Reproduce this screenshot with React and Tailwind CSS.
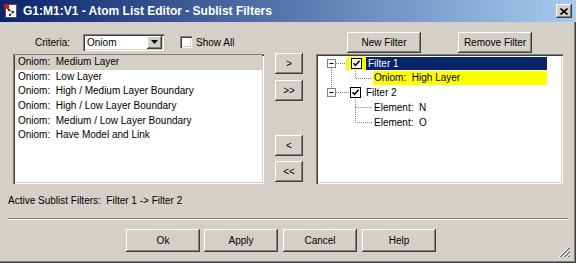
import React from "react";

const raised =
  "bg-[#d4d0c8] shadow-[inset_-1px_-1px_0_#404040,inset_1px_1px_0_#ffffff,inset_-2px_-2px_0_#808080]";
const sunken =
  "bg-white shadow-[inset_1px_1px_0_#808080,inset_2px_2px_0_#404040,inset_-1px_-1px_0_#ffffff,inset_-2px_-2px_0_#d4d0c8]";

function Btn({ children, className }) {
  return (
    <div className={`${raised} flex items-center justify-center ${className}`}>
      {children}
    </div>
  );
}

function Check({ className }) {
  return (
    <div className={`w-[11px] h-[11px] bg-white border border-black flex items-center justify-center ${className}`}>
      <svg width="9" height="9" viewBox="0 0 9 9">
        <path d="M1.5 4.2 L3.5 6.3 L7.6 1.8" fill="none" stroke="#000" strokeWidth="1.6" />
      </svg>
    </div>
  );
}

export default function App() {
  const items = [
    "Oniom:  Medium Layer",
    "Oniom:  Low Layer",
    "Oniom:  High / Medium Layer Boundary",
    "Oniom:  High / Low Layer Boundary",
    "Oniom:  Medium / Low Layer Boundary",
    "Oniom:  Have Model and Link",
  ];
  return (
    <div className="w-[576px] h-[263px] bg-[#d4d0c8] flex flex-col font-['Liberation_Sans',Arial,sans-serif] text-[10px] text-black relative overflow-hidden shadow-[inset_-1px_-1px_0_#404040,inset_-2px_-2px_0_#808080]">
      {/* Title bar */}
      <div className="h-[22px] flex items-center bg-[linear-gradient(to_right,#0a246a,#a6caf0)] pl-[4px] pr-[4px] shrink-0">
        <svg width="14" height="14" viewBox="0 0 14 14" className="shrink-0">
          <rect x="1.5" y="0.5" width="11" height="13" fill="#fff" stroke="#555" />
          <circle cx="5" cy="6" r="1.2" fill="#333" />
          <circle cx="9" cy="8" r="1.2" fill="#333" />
          <circle cx="6" cy="11" r="1.2" fill="#333" />
          <path d="M5 6 L9 8 L6 11" stroke="#333" strokeWidth="0.8" fill="none" />
          <rect x="0" y="0" width="5" height="5" fill="#e01010" />
        </svg>
        <div className="ml-[5px] text-white font-bold text-[12px] leading-none">
          G1:M1:V1 - Atom List Editor - Sublist Filters
        </div>
        <div className="flex-1" />
        <Btn className="w-[16px] h-[14px]">
          <svg width="8" height="7" viewBox="0 0 8 7">
            <path d="M0.5 0.5 L7.5 6.5 M7.5 0.5 L0.5 6.5" stroke="#000" strokeWidth="1.6" />
          </svg>
        </Btn>
      </div>

      {/* Body */}
      <div className="flex-1 flex flex-col px-[8px] pt-[9px]">
        <div className="flex">
          {/* Left column */}
          <div className="ml-[5px] w-[251px] flex flex-col">
            <div className="h-[22px] flex items-center">
              <span className="ml-[22px]">Criteria:</span>
              <div className={`${sunken} ml-[13px] w-[81px] h-[17px] flex items-center pl-[4px] pr-[2px]`}>
                <span className="flex-1">Oniom</span>
                <Btn className="w-[15px] h-[13px]">
                  <svg width="7" height="4" viewBox="0 0 7 4">
                    <path d="M0 0 H7 L3.5 4 Z" fill="#000" />
                  </svg>
                </Btn>
              </div>
              <div className={`${sunken} ml-[16px] w-[12px] h-[12px]`} />
              <span className="ml-[4px]">Show All</span>
            </div>
            <div className={`${sunken} mt-[1px] h-[130px] pt-[1px] px-[2px] flex flex-col`}>
              {items.map((t, i) => (
                <div
                  key={t}
                  className={`h-[14.7px] leading-[14.7px] pl-[3px] whitespace-pre ${i === 0 ? "bg-[#d4d0c8]" : ""}`}
                >
                  {t}
                </div>
              ))}
            </div>
          </div>

          {/* Middle buttons */}
          <div className="ml-[11px] w-[28px] flex flex-col pt-[22px]">
            <Btn className="h-[21px]">&gt;</Btn>
            <Btn className="h-[21px] mt-[6px]">&gt;&gt;</Btn>
            <Btn className="h-[21px] mt-[34px]">&lt;</Btn>
            <Btn className="h-[21px] mt-[5px]">&lt;&lt;</Btn>
          </div>

          {/* Right column */}
          <div className="ml-[13px] w-[247px] flex flex-col">
            <div className="h-[22px] flex items-center">
              <Btn className="ml-[31px] w-[74px] h-[21px]">New Filter</Btn>
              <Btn className="ml-[37px] w-[74px] h-[21px]">Remove Filter</Btn>
            </div>
            <div className={`${sunken} mt-[1px] h-[130px] pt-[2px] relative flex flex-col`}>
              <svg className="absolute left-0 top-0" width="247" height="130" viewBox="0 0 247 130">
                <g stroke="#808080" strokeWidth="1" strokeDasharray="1 1" fill="none">
                  <path d="M15.5 14 V34" />
                  <path d="M20 9.5 H33" />
                  <path d="M20 38.5 H33" />
                  <path d="M39.5 15 V24.5 H56" />
                  <path d="M39.5 44 V68.5 H56" />
                  <path d="M39.5 53.5 H56" />
                </g>
                <g>
                  <rect x="11.5" y="5.5" width="8" height="8" fill="#fff" stroke="#808080" />
                  <path d="M13.5 9.5 H17.5" stroke="#000" />
                  <rect x="11.5" y="34.5" width="8" height="8" fill="#fff" stroke="#808080" />
                  <path d="M13.5 38.5 H17.5" stroke="#000" />
                </g>
              </svg>
              <div className="h-[14.7px] flex items-center relative">
                <div className="ml-[30px] w-[20px] h-[13px] bg-[#ffff00] flex items-center justify-center">
                  <Check />
                </div>
                <div className="w-[181px] h-[13px] bg-[#0a246a] text-white leading-[13px] pl-[2px]">
                  Filter 1
                </div>
              </div>
              <div className="h-[14.7px] flex items-center relative">
                <div className="ml-[57px] w-[174px] h-[14px] bg-[#ffff00] leading-[14px] pl-[1px] whitespace-pre">
                  Oniom:  High Layer
                </div>
              </div>
              <div className="h-[14.7px] flex items-center relative">
                <Check className="ml-[34px]" />
                <span className="ml-[5px]">Filter 2</span>
              </div>
              <div className="h-[14.7px] flex items-center relative">
                <span className="ml-[58px] whitespace-pre">Element:  N</span>
              </div>
              <div className="h-[14.7px] flex items-center relative">
                <span className="ml-[58px] whitespace-pre">Element:  O</span>
              </div>
            </div>
          </div>
        </div>

        <div className="mt-[10px] h-[14px] leading-[14px] whitespace-pre">
          Active Sublist Filters:  Filter 1 -&gt; Filter 2
        </div>

        <div className="mt-[10px] h-[2px] border-t border-[#808080] border-b border-b-white" />

        <div className="mt-[9px] flex">
          <Btn className="ml-[118px] w-[74px] h-[23px]">Ok</Btn>
          <Btn className="ml-[4px] w-[74px] h-[23px]">Apply</Btn>
          <Btn className="ml-[5px] w-[74px] h-[23px]">Cancel</Btn>
          <Btn className="ml-[5px] w-[74px] h-[23px]">Help</Btn>
        </div>
      </div>

      {/* resize grip */}
      <svg className="absolute right-[5px] bottom-[5px]" width="13" height="13" viewBox="0 0 13 13">
        <g strokeWidth="1">
          <path d="M12 1 L1 12" stroke="#ffffff" />
          <path d="M12 2 L2 12" stroke="#808080" />
          <path d="M12 3 L3 12" stroke="#808080" />
          <path d="M12 5 L5 12" stroke="#ffffff" />
          <path d="M12 6 L6 12" stroke="#808080" />
          <path d="M12 7 L7 12" stroke="#808080" />
          <path d="M12 9 L9 12" stroke="#ffffff" />
          <path d="M12 10 L10 12" stroke="#808080" />
          <path d="M12 11 L11 12" stroke="#808080" />
        </g>
      </svg>
    </div>
  );
}
